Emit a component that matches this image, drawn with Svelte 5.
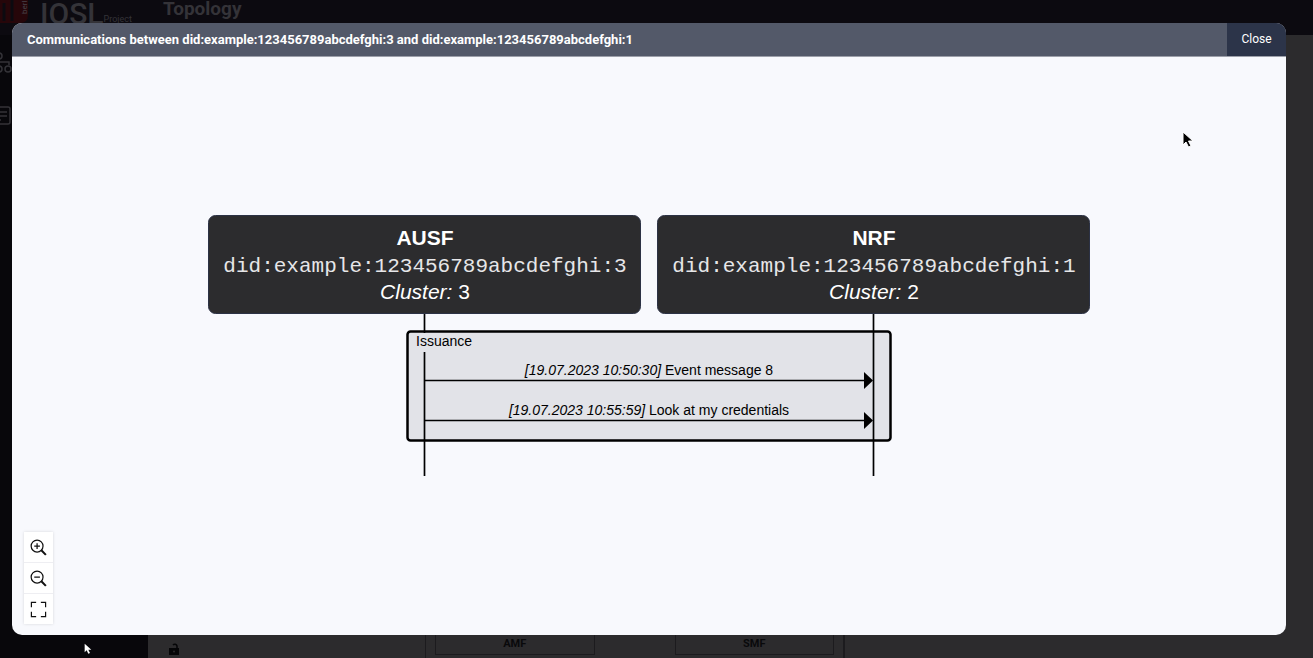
<script>
  const participants = [
    { name: 'AUSF', did: 'did:example:123456789abcdefghi:3', cluster: 3, x: 0 },
    { name: 'NRF', did: 'did:example:123456789abcdefghi:1', cluster: 2, x: 449 }
  ];
  const messages = [
    { time: '[19.07.2023 10:50:30]', text: 'Event message 8', y: 165 },
    { time: '[19.07.2023 10:55:59]', text: 'Look at my credentials', y: 205 }
  ];
</script>

<div class="app">
  <header class="topbar">
    <div class="brand">
      <svg class="mark" width="31" height="26" viewBox="0 0 31 26" aria-hidden="true">
        <path d="M0 0h28v15q0 8-8 8H0z" fill="#26060a" />
        <path d="M4 3v18M12 0v21" stroke="#0c0a10" stroke-width="3" />
        <text x="-14" y="27" transform="rotate(-90)" font-size="8" fill="#48434a">berl</text>
      </svg>
      <span class="logo">IOSL</span><span class="project">Project</span>
    </div>
    <h1>Topology</h1>
  </header>
  <nav class="side" aria-label="Main">
    <a href="#topology" aria-label="Topology">
      <svg width="22" height="22" viewBox="0 0 22 22" fill="none" stroke="#343338" stroke-width="1.5">
        <circle cx="8" cy="4" r="3" /><path d="M8 7v3M0 13v-3h18v3" />
        <circle cx="8" cy="17" r="3" /><circle cx="17" cy="17" r="3" />
      </svg>
    </a>
    <a href="#events" aria-label="Events">
      <svg width="22" height="22" viewBox="0 0 22 22" fill="none" stroke="#343338" stroke-width="1.5">
        <rect x="-3" y="3" width="22" height="17" rx="2" /><path d="M2 8h14M2 12h14M2 16h8" />
      </svg>
    </a>
  </nav>
  <main class="page">
    <div class="lane first">
      <svg width="12" height="14" viewBox="0 0 12 14" aria-hidden="true">
        <path d="M1 6h10v7H1z" fill="#050507" /><path d="M9 7V4a2.3 2.3 0 0 0-4-1" fill="none" stroke="#050507" stroke-width="1.5" /><circle cx="6" cy="9.5" r="1" fill="#2c2b2d" />
      </svg>
    </div>
    <div class="lane nodes"><div class="node">AMF</div><div class="node">SMF</div></div>
    <div class="lane"></div>
  </main>
</div>

<div class="backdrop">
  <section class="modal" role="dialog" aria-modal="true" aria-labelledby="dialog-title">
    <header class="bar">
      <h2 id="dialog-title">Communications between did:example:123456789abcdefghi:3 and did:example:123456789abcdefghi:1</h2>
      <button class="close">Close</button>
    </header>
    <div class="canvas">
      <svg class="diagram" width="882" height="261" viewBox="0 0 882 261">
        <rect x="199.5" y="116.5" width="483" height="109" rx="3" fill="#e2e3e8" stroke="#000" stroke-width="2.5" />
        <path d="M216.5 99V261M665.5 99V261" stroke="#000" stroke-width="1.7" />
        <rect x="204" y="118" width="64" height="19" fill="#e2e3e8" />
        <text class="label" x="208" y="131">Issuance</text>
        {#each participants as p}
          <g transform="translate({p.x} 0)">
            <rect x="0.5" y="0.5" width="432" height="98" rx="7" fill="#2c2c2e" stroke="#2c3245" />
            <text class="name" x="217" y="30">{p.name}</text>
            <text class="did" x="217" y="57">{p.did}</text>
            <text class="cluster" x="217" y="84"><tspan class="em">Cluster:</tspan> {p.cluster}</text>
          </g>
        {/each}
        {#each messages as m}
          <text class="message" x="441" y={m.y - 5}><tspan class="em">{m.time}</tspan> {m.text}</text>
          <path d="M217 {m.y + 0.5}H657" stroke="#000" stroke-width="1.7" />
          <path d="M656 {m.y - 8}l9 8.5l-9 8.5z" />
        {/each}
      </svg>
      <div class="tools">
        <button aria-label="Zoom in">
          <svg width="17" height="17" viewBox="0 0 18 18"><circle cx="7.5" cy="7.5" r="6.3" /><path d="M4.500 7.500h6M7.500 4.500v6" /><path class="handle" d="M12 12l4.800 4.800" /></svg>
        </button>
        <button aria-label="Zoom out">
          <svg width="17" height="17" viewBox="0 0 18 18"><circle cx="7.5" cy="7.5" r="6.3" /><path d="M4.500 7.500h6" /><path class="handle" d="M12 12l4.800 4.800" /></svg>
        </button>
        <button aria-label="Fit to view">
          <svg width="17" height="17" viewBox="0 0 18 18"><path d="M1.500 6.500v-5h5M11.500 1.500h5v5M16.500 11.500v5h-5M6.500 16.500h-5v-5" /></svg>
        </button>
      </div>
    </div>
  </section>
</div>

<svg class="pointer main-pointer" width="12" height="18" viewBox="0 0 12 18" aria-hidden="true">
  <path d="M1 1v13l3-3 2.500 5 2.500-1-2.500-5H11z" fill="#000" stroke="#fff" />
</svg>
<svg class="pointer small-pointer" width="8" height="12" viewBox="0 0 12 18" aria-hidden="true">
  <path d="M1 1v13l3-3 2.500 5 2.500-1-2.500-5H11z" fill="#fff" />
</svg>

<style>
  :global(body) { margin: 0; background: #2c2b2d; overflow: hidden; }
  .app, .backdrop { font-family: Roboto, sans-serif; }
  .app {
    display: grid;
    grid-template: 35px 1fr / 148px 1fr;
    height: 100vh;
    color: #343338;
  }
  .topbar {
    grid-column: 1 / -1;
    display: grid;
    grid-template-columns: 163px 1fr;
    background: #0c0a10;
  }
  .brand { display: flex; align-items: flex-start; }
  .mark { margin-right: 9px; }
  .logo { font-size: 30px; line-height: 27px; font-weight: 500; }
  .project { font-size: 9px; line-height: 38px; }
  h1 { margin: 0; font-size: 19px; line-height: 18px; font-weight: 700; }
  .side { display: flex; flex-direction: column; gap: 30px; padding-top: 17px; background: #08070b; }
  .side a { height: 22px; margin-left: -9px; }
  .page { display: flex; align-items: flex-end; }
  .lane { box-sizing: border-box; height: 24px; flex: 1; border-left: 1px solid #1c1b1e; }
  .first { flex: 0 0 277px; padding: 7px 0 0 20px; border: 0; }
  .nodes { display: flex; flex: 0 0 419px; gap: 80px; padding: 0 9px; border-right: 1px solid #1c1b1e; }
  .node {
    box-sizing: border-box;
    flex: 1;
    height: 21px;
    border: solid #1c1b1e;
    border-width: 0 1px 1px;
    text-align: center;
    font-size: 11px;
    line-height: 19px;
    font-weight: 700;
    color: #09090b;
  }
  .backdrop { position: fixed; inset: 0; display: flex; padding: 23px 27px 23px 12px; }
  .modal { display: flex; flex: 1; flex-direction: column; overflow: hidden; border-radius: 10px; background: #f8f9fd; }
  .bar { display: flex; height: 33px; background: #535969; color: #fff; border-bottom: 1px solid #9da0aa; }
  h2 { flex: 1; margin: 0; padding-left: 15px; font-size: 13px; line-height: 33px; font-weight: 700; }
  .close { width: 59px; padding: 0; border: 0; background: #2c3449; color: #fff; font: 400 12px/33px Roboto, sans-serif; }
  .canvas { position: relative; flex: 1; display: flex; align-items: center; justify-content: center; padding-bottom: 2px; }
  .diagram { font-family: "Liberation Sans", Arial, sans-serif; }
  .name, .did, .cluster { fill: #fff; text-anchor: middle; }
  .name { font-size: 21px; font-weight: 700; }
  .did { font-family: "Liberation Mono", "Courier New", monospace; font-size: 21px; fill: #e6e6e8; }
  .cluster { font-size: 21px; }
  .em { font-style: italic; }
  .label, .message { font-size: 14px; }
  .message { text-anchor: middle; }
  .tools { position: absolute; left: 12px; bottom: 11px; display: grid; gap: 1px; box-shadow: 0 0 3px #0002; background: #eeeef2; }
  .tools button { display: grid; place-items: center; width: 29px; height: 30px; padding: 0; border: 0; background: #fff; }
  .tools svg { fill: none; stroke: #111; stroke-width: 1.3; }
  .tools .handle { stroke-width: 2.2; }
  .pointer { position: fixed; }
  .main-pointer { left: 1182px; top: 131px; }
  .small-pointer { left: 84px; top: 643px; }
</style>
